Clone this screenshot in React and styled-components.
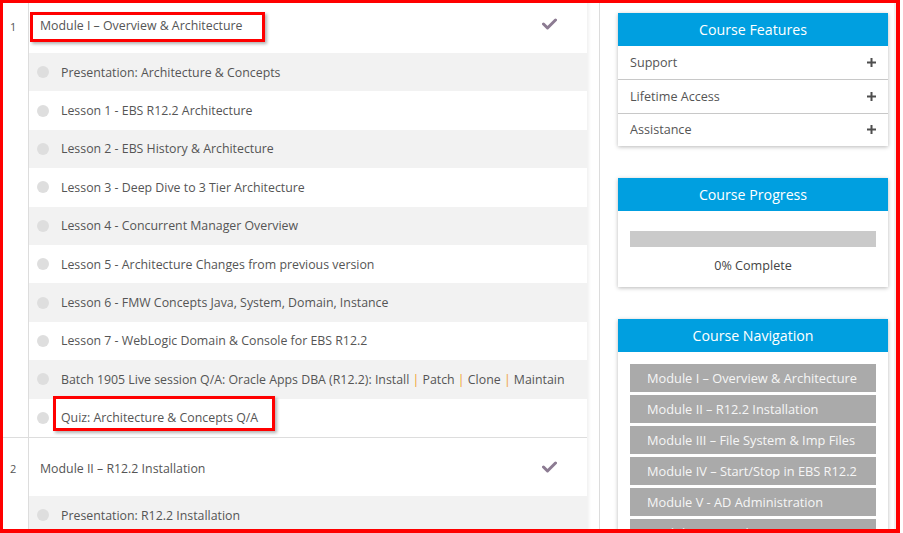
import React from "react";
import styled, { createGlobalStyle } from "styled-components";

const Global = createGlobalStyle`
  html, body { margin: 0; padding: 0; background: #fff; }
  body { font-family: "Open Sans", "Noto Sans", sans-serif; }
  * { box-sizing: border-box; }
`;

const Frame = styled.div`
  width: 900px;
  height: 533px;
  border-style: solid;
  border-color: #ff0000;
  border-width: 3px 4px 4px 3px;
  overflow: hidden;
  display: flex;
  background: #fff;
`;

const LeftCol = styled.div`
  width: 597px;
  flex: none;
  border-right: 1px solid #dcdcdc;
  overflow: hidden;
`;

const List = styled.div`
  width: 584px;
  margin-top: -9px;
  box-shadow: 2px 0 3px rgba(0, 0, 0, 0.06);
`;

const Module = styled.div`
  display: flex;
  border-top: 1px solid #dddddd;
`;

const NumCell = styled.div`
  width: 26px;
  flex: none;
  border-right: 1px solid #dddddd;
`;

const NumLabel = styled.div`
  height: 58px;
  display: flex;
  align-items: center;
  padding: 4px 0 0 7px;
  font-size: 11px;
  color: #555;
`;

const ModBody = styled.div`
  flex: 1;
  min-width: 0;
`;

const ModHeader = styled.div`
  height: 58px;
  display: flex;
  align-items: center;
  justify-content: space-between;
  padding: 4px 30px 0 11px;
  font-size: 12.35px;
  color: #555;
`;

const CheckWrap = styled.span`
  display: flex;
  margin-top: -4px;
`;

const Highlight = styled.span`
  display: inline-block;
  border: 3px solid #ff0000;
  box-shadow: 2px 2px 3px rgba(0, 0, 0, 0.3);
  width: ${(p) => p.$w}px;
  padding: ${(p) => p.$pad};
  margin: ${(p) => p.$margin};
  line-height: 18px;
`;

const Lesson = styled.div`
  height: 38.4px;
  display: flex;
  align-items: center;
  gap: 12px;
  padding-left: 8px;
  font-size: 12.35px;
  color: #555;
  background: ${(p) => (p.$alt ? "#f2f2f2" : "#ffffff")};
  white-space: nowrap;
`;

const Dot = styled.span`
  width: 12px;
  height: 12px;
  border-radius: 50%;
  background: #dedede;
  flex: none;
`;

const Pipe = styled.span`
  color: #f0a030;
`;

const RightCol = styled.div`
  flex: 1;
  padding: 10px 0 0 18px;
  border-right: 2px solid #f0f0f0;
  display: flex;
  flex-direction: column;
  gap: 32px;
`;

const Card = styled.div`
  width: 270px;
  background: #fff;
  box-shadow: 0 1px 4px rgba(0, 0, 0, 0.28);
`;

const CardHead = styled.div`
  height: 33px;
  background: #009fe0;
  color: #fff;
  font-size: 14.2px;
  display: flex;
  align-items: center;
  justify-content: center;
`;

const FeatureRow = styled.div`
  height: ${(p) => (p.$first ? "33px" : "33.5px")};
  display: flex;
  align-items: center;
  justify-content: space-between;
  padding: 0 12px;
  font-size: 12.6px;
  color: #555;
  border-top: ${(p) => (p.$first ? "none" : "1px solid #c8c8c8")};
`;

const ProgressBody = styled.div`
  padding: 20px 12px 12px;
  display: flex;
  flex-direction: column;
  align-items: stretch;
`;

const Bar = styled.div`
  height: 16px;
  background: #cacaca;
`;

const ProgressText = styled.div`
  margin-top: 9px;
  text-align: center;
  font-size: 12.6px;
  line-height: 19px;
  color: #444;
`;

const NavBody = styled.div`
  padding: 12px 12px 20px;
  display: flex;
  flex-direction: column;
  gap: 3px;
`;

const NavButton = styled.div`
  height: 28px;
  background: #aaaaaa;
  color: #f6f6f6;
  font-size: 12.8px;
  display: flex;
  align-items: center;
  padding-left: 17px;
  white-space: nowrap;
`;

const Check = () => (
  <CheckWrap>
    <svg width="15" height="12" viewBox="0 0 15 12">
      <polyline
        points="1.5,6 5.5,10 13.5,2"
        fill="none"
        stroke="#8c7b92"
        strokeWidth="3"
        strokeLinecap="round"
        strokeLinejoin="round"
      />
    </svg>
  </CheckWrap>
);

const Plus = () => (
  <svg width="9" height="9" viewBox="0 0 9 9">
    <rect x="3.5" y="0" width="2" height="9" fill="#4e4e4e" />
    <rect x="0" y="3.5" width="9" height="2" fill="#4e4e4e" />
  </svg>
);

const lessons1 = [
  "Presentation: Architecture & Concepts",
  "Lesson 1 - EBS R12.2 Architecture",
  "Lesson 2 - EBS History & Architecture",
  "Lesson 3 - Deep Dive to 3 Tier Architecture",
  "Lesson 4 - Concurrent Manager Overview",
  "Lesson 5 - Architecture Changes from previous version",
  "Lesson 6 - FMW Concepts Java, System, Domain, Instance",
  "Lesson 7 - WebLogic Domain & Console for EBS R12.2",
];

const navItems = [
  "Module I – Overview & Architecture",
  "Module II – R12.2 Installation",
  "Module III – File System & Imp Files",
  "Module IV – Start/Stop in EBS R12.2",
  "Module V - AD Administration",
  "Module VI – Patching",
];

export default function App() {
  return (
    <>
      <Global />
      <Frame>
        <LeftCol>
          <List>
            <Module>
              <NumCell>
                <NumLabel>1</NumLabel>
              </NumCell>
              <ModBody>
                <ModHeader>
                  <Highlight $w={235} $pad="2px 0 4px 7px" $margin="2px 0 0 -10px">
                    Module I – Overview &amp; Architecture
                  </Highlight>
                  <Check />
                </ModHeader>
                {lessons1.map((t, i) => (
                  <Lesson key={t} $alt={i % 2 === 0}>
                    <Dot />
                    <span>{t}</span>
                  </Lesson>
                ))}
                <Lesson $alt>
                  <Dot />
                  <span>
                    Batch 1905 Live session Q/A: Oracle Apps DBA (R12.2): Install <Pipe>|</Pipe> Patch{" "}
                    <Pipe>|</Pipe> Clone <Pipe>|</Pipe> Maintain
                  </span>
                </Lesson>
                <Lesson>
                  <Dot />
                  <Highlight $w={222} $pad="10px 0 1px 5px" $margin="-8px 0 0 -8px">
                    Quiz: Architecture &amp; Concepts Q/A
                  </Highlight>
                </Lesson>
              </ModBody>
            </Module>
            <Module>
              <NumCell>
                <NumLabel>2</NumLabel>
              </NumCell>
              <ModBody>
                <ModHeader>
                  <span>Module II – R12.2 Installation</span>
                  <Check />
                </ModHeader>
                <Lesson $alt>
                  <Dot />
                  <span>Presentation: R12.2 Installation</span>
                </Lesson>
                <Lesson>
                  <Dot />
                  <span>Lesson 1 - Installation Overview</span>
                </Lesson>
              </ModBody>
            </Module>
          </List>
        </LeftCol>
        <RightCol>
          <Card>
            <CardHead>Course Features</CardHead>
            <FeatureRow $first>
              <span>Support</span>
              <Plus />
            </FeatureRow>
            <FeatureRow>
              <span>Lifetime Access</span>
              <Plus />
            </FeatureRow>
            <FeatureRow>
              <span>Assistance</span>
              <Plus />
            </FeatureRow>
          </Card>
          <Card>
            <CardHead>Course Progress</CardHead>
            <ProgressBody>
              <Bar />
              <ProgressText>0% Complete</ProgressText>
            </ProgressBody>
          </Card>
          <Card>
            <CardHead>Course Navigation</CardHead>
            <NavBody>
              {navItems.map((t) => (
                <NavButton key={t}>{t}</NavButton>
              ))}
            </NavBody>
          </Card>
        </RightCol>
      </Frame>
    </>
  );
}
